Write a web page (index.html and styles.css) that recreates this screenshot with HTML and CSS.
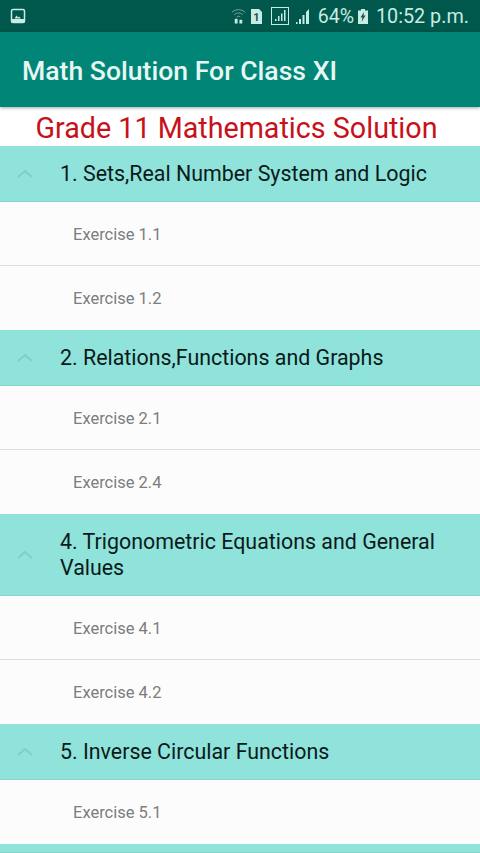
FILE: index.html
```html
<!DOCTYPE html>
<html lang="en">
<head>
<meta charset="utf-8">
<title>Math Solution For Class XI</title>
<link rel="stylesheet" href="styles.css">
</head>
<body>
<div class="status">
  <svg class="st-img" width="16" height="16" viewBox="0 0 16 16"><rect x="1.5" y="1.5" width="13" height="13" rx="1.5" fill="none" stroke="#c8ece4" stroke-width="1.5"/><rect x="1.5" y="11" width="13" height="3.5" fill="#c8ece4"/><path d="M4.5 10.5l2-3 1.5 2 1-1 2 2z" fill="#c8ece4"/></svg>
  <div class="st-right">
    <svg width="15" height="18" viewBox="0 0 16 18"><g fill="none" stroke="#7fa89e" stroke-width="1"><path d="M1 5a10 10 0 0 1 14 0"/><path d="M3.500 7.500a6.500 6.500 0 0 1 9 0"/><path d="M6 10a3 3 0 0 1 4 0"/></g><rect x="4" y="12" width="3" height="5" fill="#c8ece4"/><rect x="9" y="13" width="3" height="4" fill="#c8ece4"/></svg>
    <svg class="sim" width="13" height="17" viewBox="0 0 13 17"><path d="M1 1h8l3 3v12H1z" fill="#c8ece4"/><text x="6.500" y="13" text-anchor="middle" class="sim-n">1</text></svg>
    <svg class="box" width="18" height="18" viewBox="0 0 18 18"><rect x=".5" y=".5" width="17" height="17" fill="none" stroke="#c8ece4"/><path d="M4 14h1.500v-2H4zM7 14h1.500V9H7zM10 14h1.500V6.500H10zM13 14h1.500V3H13z" fill="#c8ece4"/></svg>
    <svg class="sig" width="16" height="16" viewBox="0 0 16 16"><path d="M1 16h1.500v-2H1zM4 16h2v-5H4zM7.500 16h2V7h-2zM11 16h3V1l-3 3z" fill="#c8ece4"/></svg>
    <span class="pct">64%</span>
    <svg class="batt" width="10" height="15" viewBox="0 0 10 15"><path d="M3 0h4v1.500h3V15H0V1.500h3z" fill="#c8ece4"/><path d="M6 3L2.500 8.500h2L3.500 13 7.500 6.500h-2z" fill="#14524a"/></svg>
    <span class="time">10:52 p.m.</span>
  </div>
</div>
<header class="appbar">Math Solution For Class XI</header>
<h1 class="page-title">Grade 11 Mathematics Solution</h1>
<section>
  <div class="group"><svg class="chev" width="18" height="10" viewBox="0 0 18 10"><path d="M2 8l7-6 7 6" /></svg><div class="group-label">1. Sets,Real Number System and Logic</div></div>
  <div class="item">Exercise 1.1</div>
  <div class="item last">Exercise 1.2</div>
</section>
<section>
  <div class="group"><svg class="chev" width="18" height="10" viewBox="0 0 18 10"><path d="M2 8l7-6 7 6" /></svg><div class="group-label">2. Relations,Functions and Graphs</div></div>
  <div class="item">Exercise 2.1</div>
  <div class="item last">Exercise 2.4</div>
</section>
<section>
  <div class="group"><svg class="chev" width="18" height="10" viewBox="0 0 18 10"><path d="M2 8l7-6 7 6" /></svg><div class="group-label">4. Trigonometric Equations and General Values</div></div>
  <div class="item">Exercise 4.1</div>
  <div class="item last">Exercise 4.2</div>
</section>
<section>
  <div class="group"><svg class="chev" width="18" height="10" viewBox="0 0 18 10"><path d="M2 8l7-6 7 6" /></svg><div class="group-label">5. Inverse Circular Functions</div></div>
  <div class="item last">Exercise 5.1</div>
</section>
<div class="group tail"></div>
</body>
</html>
```
FILE: styles.css
```css
html, body { margin: 0; padding: 0; }
body {
  width: 480px;
  height: 853px;
  overflow: hidden;
  background: #fcfcfc;
  font-family: Roboto, "Liberation Sans", sans-serif;
}
.status {
  height: 32px;
  background: #00574b;
  display: flex;
  align-items: center;
  justify-content: space-between;
  padding: 0 11px 0 10px;
}
.st-right { display: flex; align-items: center; color: #c8ece4; }
.sim { margin-left: 4px; }
.box { margin-left: 8px; }
.sig { margin-left: 6px; }
.batt { margin-left: 4px; }
.sim-n { font: 700 11px Roboto, sans-serif; fill: #14524a; }
.pct { font-size: 19.500px; margin-left: 7px; }
.time { font-size: 19.800px; margin-left: 8px; }
.appbar {
  height: 75px;
  line-height: 78px;
  padding-left: 22px;
  background: #008577;
  color: #e6f7f4;
  font-size: 26.600px;
  font-weight: 500;
  box-shadow: 0 1px 3px rgba(0,0,0,.35);
  position: relative;
}
.page-title {
  margin: 0;
  height: 39px;
  line-height: 42px;
  padding-right: 7px;
  text-align: center;
  color: #c8101a;
  font-size: 28.700px;
  font-weight: 400;
  background: #fff;
}
.group {
  min-height: 56px;
  box-sizing: border-box;
  background: #8fe3da;
  display: flex;
  align-items: center;
  border-bottom: 1px solid #85d5cc;
}
.chev { margin-left: 16px; flex: none; }
.chev path { fill: none; stroke: #7fcfc5; stroke-width: 2; }
.group-label {
  margin-left: 26px;
  padding: 15px 20px 14px 0;
  font-size: 21.400px;
  line-height: 26px;
  color: #0a1a1a;
}
.item {
  height: 64px;
  box-sizing: border-box;
  padding-left: 73px;
  line-height: 66px;
  font-size: 16.500px;
  color: #7d7d7d;
  background: #fcfcfc;
  border-bottom: 1px solid #dedede;
}
.item.last { border-bottom: 0; }
.tail { min-height: 9px; }
```
